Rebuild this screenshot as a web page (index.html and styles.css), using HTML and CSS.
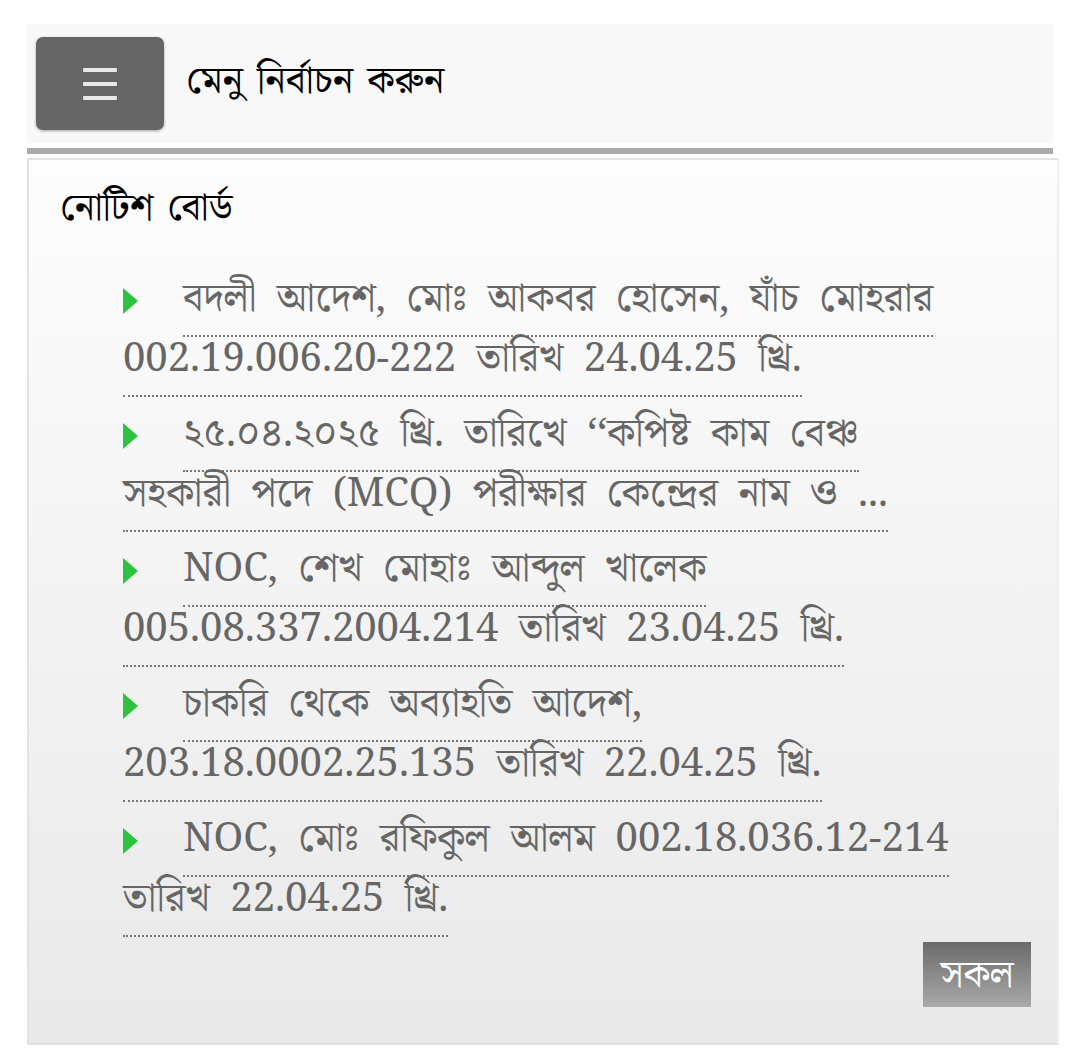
FILE: index.html
```html
<!DOCTYPE html>
<html lang="bn">
<head>
<meta charset="utf-8">
<title>নোটিশ বোর্ড</title>
<link rel="stylesheet" href="styles.css">
</head>
<body>
<div class="page">
  <header class="topbar">
    <button class="menu-btn" aria-label="menu">
      <span class="bar"></span><span class="bar"></span><span class="bar"></span>
    </button>
    <span class="menu-title">মেনু নির্বাচন করুন</span>
  </header>
  <div class="divider"></div>
  <section class="notice">
    <h2 class="notice-title">নোটিশ বোর্ড</h2>
    <ul class="notice-list">
      <li><span class="arrow"></span><a href="#">বদলী আদেশ, মোঃ আকবর হোসেন, যাঁচ মোহরার<br>002.19.006.20-222 তারিখ 24.04.25 খ্রি.</a></li>
      <li><span class="arrow"></span><a href="#">২৫.০৪.২০২৫ খ্রি. তারিখে ‘‘কপিষ্ট কাম বেঞ্চ<br>সহকারী পদে (MCQ) পরীক্ষার কেন্দ্রের নাম ও ...</a></li>
      <li><span class="arrow"></span><a href="#">NOC, শেখ মোহাঃ আব্দুল খালেক<br>005.08.337.2004.214 তারিখ 23.04.25 খ্রি.</a></li>
      <li><span class="arrow"></span><a href="#">চাকরি থেকে অব্যাহতি আদেশ,<br>203.18.0002.25.135 তারিখ 22.04.25 খ্রি.</a></li>
      <li><span class="arrow"></span><a href="#">NOC, মোঃ রফিকুল আলম 002.18.036.12-214<br>তারিখ 22.04.25 খ্রি.</a></li>
    </ul>
    <div class="more-row"><a class="more-btn" href="#">সকল</a></div>
  </section>
</div>
</body>
</html>
```

FILE: styles.css
```css
html, body {
  margin: 0;
  padding: 0;
  background: #ffffff;
}
body {
  font-family: "Noto Serif", "Liberation Serif", "Noto Serif Bengali", "Lohit Bengali", "Noto Sans Bengali", "FreeSerif", serif;
}
.page {
  width: 1032px;
  padding: 24px 0 0 27px;
}
.topbar {
  display: flex;
  align-items: center;
  gap: 22px;
  height: 119px;
  padding-left: 9px;
  background: #f8f8f8;
  width: 1017px;
}
.menu-btn {
  width: 128px;
  height: 93px;
  border: none;
  border-radius: 7px;
  background: #666666;
  box-shadow: 0 1px 3px rgba(0,0,0,0.35);
  display: flex;
  flex-direction: column;
  align-items: center;
  justify-content: center;
  gap: 10px;
  padding: 0;
}
.menu-btn .bar {
  display: block;
  width: 34px;
  height: 4px;
  background: #e8e8e8;
  border-radius: 1px;
}
.menu-title {
  font-size: 39px;
  color: #000;
  padding-bottom: 4px;
  word-spacing: 4px;
}
.divider {
  height: 6px;
  margin-top: 5px;
  width: 1026px;
  background: #aaaaaa;
}
.notice {
  margin-top: 4px;
  border: 2px solid #e2e2e2;
  border-right-color: #efefef;
  background: linear-gradient(#fdfdfd, #e9e9e9);
  padding: 18px 26px 30px 31px;
  height: 887px;
  box-sizing: border-box;
  width: 1032px;
}
.notice-title {
  margin: 0 0 34px 0;
  font-weight: normal;
  font-size: 38px;
  line-height: 54px;
  color: #000;
  word-spacing: 4px;
}
.notice-list {
  list-style: none;
  margin: 0;
  padding: 0 0 0 63px;
  color: #666;
}
.notice-list li {
  font-size: 40px;
  line-height: 60px;
  margin-bottom: 15px;
  word-spacing: 10px;
}
.arrow {
  display: inline-block;
  width: 0;
  height: 0;
  margin-right: 45px;
  border-top: 13px solid transparent;
  border-bottom: 13px solid transparent;
  border-left: 15px solid #2ec23f;
  vertical-align: -3px;
}
.notice-list a {
  color: #666;
  text-decoration: none;
  padding-bottom: 12px;
  border-bottom: 2px dotted #777;
}
.more-row {
  display: flex;
  justify-content: flex-end;
  margin-top: 16px;
}
.more-btn {
  display: block;
  width: 108px;
  height: 65px;
  line-height: 60px;
  text-align: center;
  color: #fff;
  text-decoration: none;
  font-size: 38px;
  background: linear-gradient(#6b6b6b, #a9a9a9);
}
```
